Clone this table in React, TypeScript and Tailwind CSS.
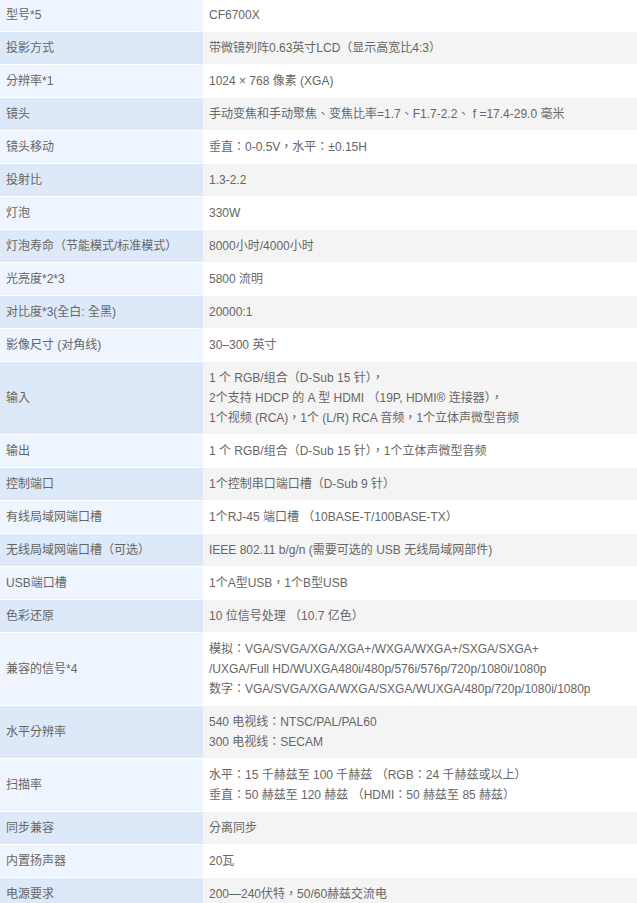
const rows: { label: string; value: string[] }[] = [
  { label: '型号*5', value: ['CF6700X'] },
  { label: '投影方式', value: ['带微镜列阵0.63英寸LCD（显示高宽比4:3）'] },
  { label: '分辨率*1', value: ['1024 × 768 像素 (XGA)'] },
  { label: '镜头', value: ['手动变焦和手动聚焦、变焦比率=1.7、F1.7-2.2、 f =17.4-29.0 毫米'] },
  { label: '镜头移动', value: ['垂直：0-0.5V，水平：±0.15H'] },
  { label: '投射比', value: ['1.3-2.2'] },
  { label: '灯泡', value: ['330W'] },
  { label: '灯泡寿命（节能模式/标准模式）', value: ['8000小时/4000小时'] },
  { label: '光亮度*2*3', value: ['5800 流明'] },
  { label: '对比度*3(全白: 全黑)', value: ['20000:1'] },
  { label: '影像尺寸 (对角线)', value: ['30–300 英寸'] },
  {
    label: '输入',
    value: [
      '1 个 RGB/组合（D-Sub 15 针），',
      '2个支持 HDCP 的 A 型 HDMI （19P, HDMI® 连接器），',
      '1个视频 (RCA)，1个 (L/R) RCA 音频，1个立体声微型音频',
    ],
  },
  { label: '输出', value: ['1 个 RGB/组合（D-Sub 15 针），1个立体声微型音频'] },
  { label: '控制端口', value: ['1个控制串口端口槽（D-Sub 9 针）'] },
  { label: '有线局域网端口槽', value: ['1个RJ-45 端口槽 （10BASE-T/100BASE-TX）'] },
  { label: '无线局域网端口槽（可选）', value: ['IEEE 802.11 b/g/n (需要可选的 USB 无线局域网部件)'] },
  { label: 'USB端口槽', value: ['1个A型USB，1个B型USB'] },
  { label: '色彩还原', value: ['10 位信号处理 （10.7 亿色）'] },
  {
    label: '兼容的信号*4',
    value: [
      '模拟：VGA/SVGA/XGA/XGA+/WXGA/WXGA+/SXGA/SXGA+',
      '/UXGA/Full HD/WUXGA480i/480p/576i/576p/720p/1080i/1080p',
      '数字：VGA/SVGA/XGA/WXGA/SXGA/WUXGA/480p/720p/1080i/1080p',
    ],
  },
  { label: '水平分辨率', value: ['540 电视线：NTSC/PAL/PAL60', '300 电视线：SECAM'] },
  {
    label: '扫描率',
    value: ['水平：15 千赫兹至 100 千赫兹 （RGB：24 千赫兹或以上）', '垂直：50 赫兹至 120 赫兹 （HDMI：50 赫兹至 85 赫兹）'],
  },
  { label: '同步兼容', value: ['分离同步'] },
  { label: '内置扬声器', value: ['20瓦'] },
  { label: '电源要求', value: ['200—240伏特，50/60赫兹交流电'] },
];

export default function App() {
  return (
    <div
      className="w-[637px] h-[903px] overflow-hidden bg-white text-[12px] leading-[20px] text-[#666]"
      style={{ fontFamily: '"Liberation Sans", Arial, "Noto Sans CJK TC", sans-serif' }}
    >
      <div className="-mt-px">
        {rows.map((row, i) => {
          const odd = i % 2 === 1;
          return (
            <div key={row.label} className="flex border-b border-white">
              <div className={`w-[203px] shrink-0 flex items-center px-[6px] py-[6px] ${odd ? 'bg-[#dde9f8]' : 'bg-[#eef5fe]'}`}>
                {row.label}
              </div>
              <div className={`flex-1 px-[6px] py-[6px] ${odd ? 'bg-[#f4f4f4]' : 'bg-white'}`}>
                {row.value.map((line) => (
                  <div key={line}>{line}</div>
                ))}
              </div>
            </div>
          );
        })}
      </div>
    </div>
  );
}
